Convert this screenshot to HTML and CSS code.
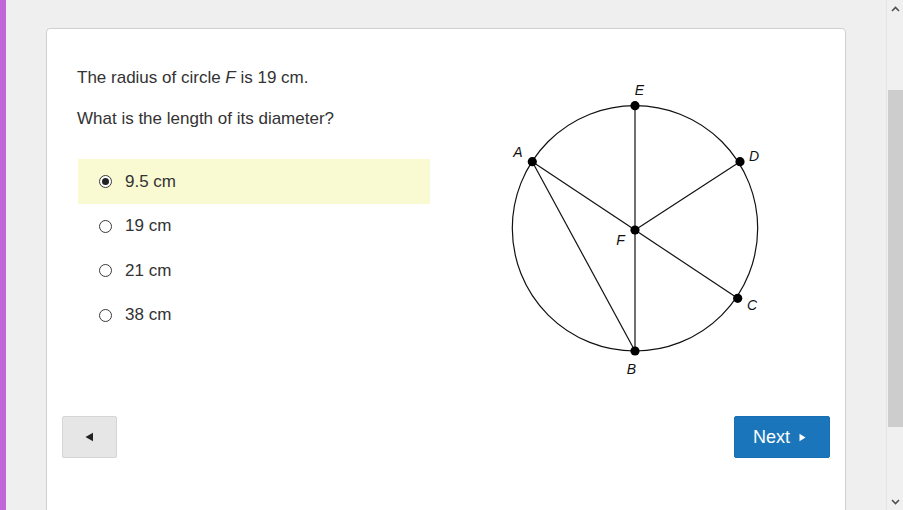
FILE: index.html
```html
<!DOCTYPE html>
<html lang="en">
<head>
<meta charset="utf-8">
<title>Quiz</title>
<link rel="stylesheet" href="styles.css">
</head>
<body>
<div class="accent"></div>
<main class="stage">
  <section class="card">
    <div class="question">
      <div class="stem">
        <p class="line">The radius of circle <i>F</i> is 19 cm.</p>
        <p class="line second">What is the length of its diameter?</p>
        <ul class="options">
          <li class="option selected"><span class="radio checked"></span><span>9.5 cm</span></li>
          <li class="option"><span class="radio"></span><span>19 cm</span></li>
          <li class="option"><span class="radio"></span><span>21 cm</span></li>
          <li class="option"><span class="radio"></span><span>38 cm</span></li>
        </ul>
      </div>
      <svg class="diagram" width="270" height="310" viewBox="0 0 270 310">
        <circle cx="135" cy="153.3" r="122.7" fill="none" stroke="#111" stroke-width="1.2"/>
        <g stroke="#111" stroke-width="1.2">
          <line x1="135" y1="30.7" x2="135" y2="276"/>
          <line x1="32.3" y1="86.7" x2="135" y2="155"/>
          <line x1="32.3" y1="86.7" x2="135" y2="276"/>
          <line x1="135" y1="155" x2="240" y2="86.7"/>
          <line x1="135" y1="155" x2="237.7" y2="223.3"/>
        </g>
        <g fill="#000">
          <circle cx="135" cy="30.7" r="4.6"/>
          <circle cx="32.3" cy="86.7" r="4.6"/>
          <circle cx="240" cy="86.7" r="4.6"/>
          <circle cx="135" cy="155" r="4.6"/>
          <circle cx="237.7" cy="223.3" r="4.6"/>
          <circle cx="135" cy="276" r="4.6"/>
        </g>
        <g class="labels" text-anchor="middle">
          <text x="139.5" y="20">E</text>
          <text x="18" y="82">A</text>
          <text x="254" y="86">D</text>
          <text x="120.5" y="170">F</text>
          <text x="252" y="235">C</text>
          <text x="131.5" y="299">B</text>
        </g>
      </svg>
    </div>
    <div class="nav">
      <button class="btn back" type="button" aria-label="Back">
        <svg width="9" height="10" viewBox="0 0 9 10"><path d="M0.5 5 L8 0.8 L8 9.2 Z" fill="#222"/></svg>
      </button>
      <button class="btn next" type="button">Next
        <svg class="tri" width="7" height="9" viewBox="0 0 7 9"><path d="M0.5 0.8 L6.5 4.5 L0.5 8.2 Z" fill="#fff"/></svg>
      </button>
    </div>
  </section>
</main>
<aside class="scrollbar">
  <div class="arrow">
    <svg width="9" height="6" viewBox="0 0 9 6"><path d="M1 5 L4.5 1.5 L8 5" fill="none" stroke="#505050" stroke-width="1.6"/></svg>
  </div>
  <div class="track"><div class="thumb"></div></div>
  <div class="arrow">
    <svg width="9" height="6" viewBox="0 0 9 6"><path d="M1 1 L4.5 4.5 L8 1" fill="none" stroke="#505050" stroke-width="1.6"/></svg>
  </div>
</aside>
</body>
</html>
```
FILE: styles.css
```css
* { box-sizing: border-box; }
html, body { margin: 0; padding: 0; }
body {
  display: flex;
  width: 903px;
  height: 510px;
  overflow: hidden;
  background: #efefef;
  font-family: "Liberation Sans", Arial, sans-serif;
  color: #333;
}
.accent {
  width: 6px;
  flex: 0 0 6px;
  background: #bf67d9;
}
.stage {
  flex: 1;
  padding: 28px 40px 0 40px;
  overflow: hidden;
}
.card {
  width: 800px;
  height: 560px;
  background: #fff;
  border: 1px solid #cfcfcf;
  border-radius: 4px;
  padding: 39px 15px 0 15px;
}
.question {
  display: flex;
  align-items: flex-start;
  padding-left: 15px;
  height: 348px;
}
.stem {
  width: 353px;
}
.line {
  margin: 0;
  font-size: 17px;
  line-height: 20px;
}
.second {
  margin-top: 21px;
}
.options {
  list-style: none;
  margin: 30px 0 0 1px;
  padding: 0;
}
.option {
  display: flex;
  align-items: center;
  gap: 13px;
  height: 44.5px;
  padding-left: 21px;
  padding-top: 1px;
  font-size: 17px;
  line-height: 20px;
}
.option.selected {
  background: #fafad2;
}
.radio {
  width: 13px;
  height: 13px;
  border: 1px solid #3a3a3a;
  border-radius: 50%;
  background: #fff;
  display: flex;
  align-items: center;
  justify-content: center;
  flex: 0 0 13px;
}
.radio.checked::after {
  content: "";
  width: 7px;
  height: 7px;
  border-radius: 50%;
  background: #222;
}
.diagram {
  display: block;
  margin-left: 70px;
  margin-top: 7px;
}
.labels {
  font-family: "Liberation Sans", Arial, sans-serif;
  font-style: italic;
  font-size: 14px;
  fill: #111;
}
.nav {
  display: flex;
  justify-content: space-between;
}
.btn {
  height: 42px;
  border-radius: 2px;
  font-family: "Liberation Sans", Arial, sans-serif;
  cursor: pointer;
}
.back {
  width: 55px;
  background: #e6e6e6;
  border: 1px solid #d6d6d6;
  display: flex;
  align-items: center;
  justify-content: center;
  padding: 0;
}
.next {
  width: 96px;
  background: #1a75bb;
  border: 1px solid #1a6fb2;
  color: #fff;
  font-size: 18px;
  display: flex;
  align-items: center;
  padding: 0 0 0 18px;
}
.next .tri {
  margin-left: 9px;
}
.scrollbar {
  width: 17px;
  flex: 0 0 17px;
  display: flex;
  flex-direction: column;
  background: #f0f0f0;
  border-left: 1px solid #e4e4e4;
}
.arrow {
  height: 17px;
  display: flex;
  align-items: center;
  justify-content: center;
}
.track {
  flex: 1;
  padding: 73px 0 0 1px;
}
.thumb {
  height: 337px;
  background: #cdcdcd;
}
```
